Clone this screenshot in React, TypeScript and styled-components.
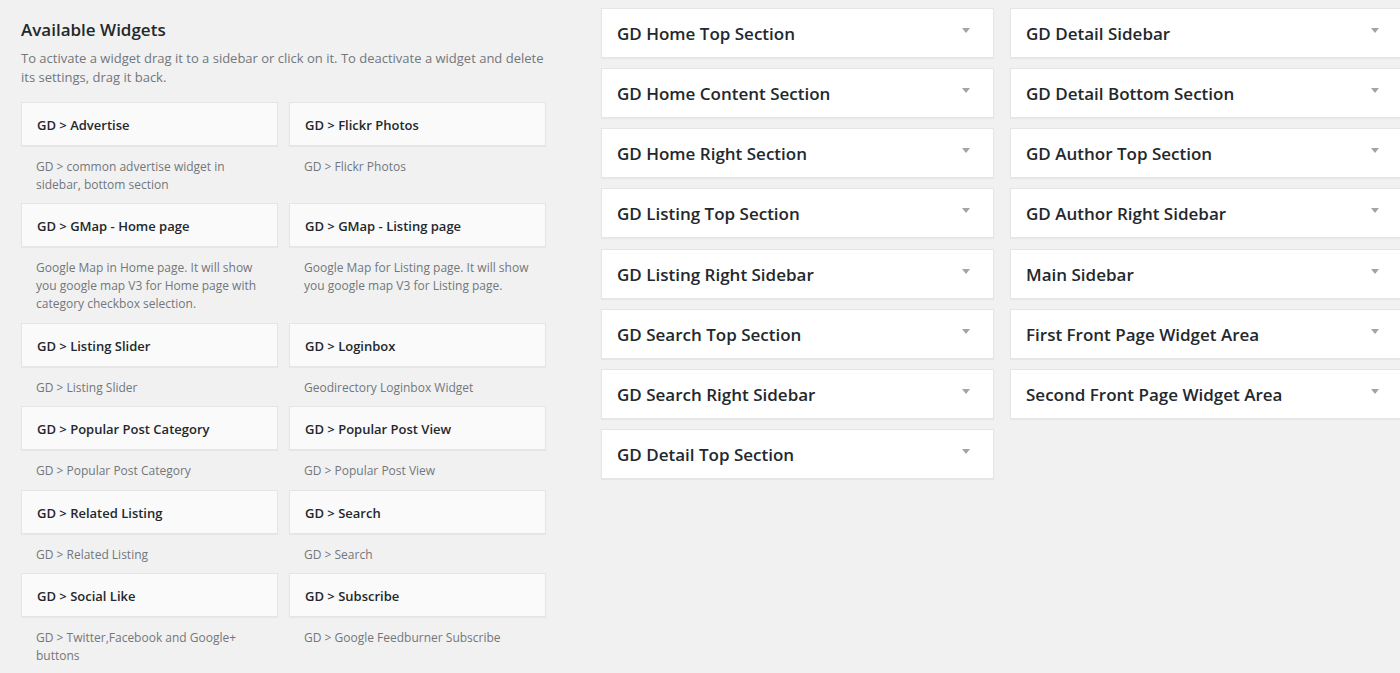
import React from "react";
import styled, { createGlobalStyle } from "styled-components";

const GlobalStyle = createGlobalStyle`
  html, body {
    margin: 0;
    padding: 0;
    background: #f1f1f1;
    overflow: hidden;
  }
  body {
    font-family: "Open Sans", "Liberation Sans", sans-serif;
    color: #23282d;
  }
`;

const Page = styled.div`
  display: flex;
  align-items: flex-start;
  padding-left: 21px;
  width: 1420px;
  height: 673px;
  box-sizing: border-box;
`;

const LeftPane = styled.section`
  width: 524px;
  flex: none;
  padding-top: 19px;
`;

const Heading = styled.h2`
  margin: 0;
  font-size: 17px;
  line-height: 22px;
  font-weight: 600;
  color: #23282d;
`;

const Intro = styled.p`
  margin: 7.5px 0 15px;
  font-size: 13px;
  line-height: 19px;
  color: #72777c;
`;

const WidgetGrid = styled.div`
  display: grid;
  grid-template-columns: 257px 257px;
  column-gap: 11px;
`;

const Widget = styled.div`
  display: flex;
  flex-direction: column;
`;

const WidgetTop = styled.div`
  background: #fafafa;
  border: 1px solid #e5e5e5;
  box-shadow: 0 1px 1px rgba(0, 0, 0, 0.04);
  padding: 15px 15px 13px;
  font-size: 13px;
  line-height: 14px;
  font-weight: 600;
  color: #23282d;
`;

const WidgetDesc = styled.div`
  padding: 12px 15px 9.5px;
  font-size: 12px;
  line-height: 18px;
  color: #72777c;
`;

const RightPane = styled.section`
  display: flex;
  gap: 16px;
  margin-left: 56px;
  padding-top: 8px;
`;

const SidebarColumn = styled.div`
  width: 393px;
  display: flex;
  flex-direction: column;
  gap: 10.15px;
`;

const SidebarPanel = styled.div`
  background: #fff;
  border: 1px solid #e5e5e5;
  box-shadow: 0 1px 1px rgba(0, 0, 0, 0.04);
  padding: 15px 15px 13px;
  display: flex;
  align-items: center;
  justify-content: space-between;
`;

const SidebarName = styled.h2`
  margin: 0;
  font-size: 17px;
  line-height: 20px;
  font-weight: 600;
  color: #23282d;
`;

const Arrow = styled.span`
  width: 0;
  height: 0;
  margin-right: 8px;
  margin-top: -7px;
  border-left: 4.5px solid transparent;
  border-right: 4.5px solid transparent;
  border-top: 5px solid #a0a5aa;
`;

const widgets: { title: string; desc: string }[] = [
  { title: "GD > Advertise", desc: "GD > common advertise widget in sidebar, bottom section" },
  { title: "GD > Flickr Photos", desc: "GD > Flickr Photos" },
  {
    title: "GD > GMap - Home page",
    desc: "Google Map in Home page. It will show you google map V3 for Home page with category checkbox selection.",
  },
  {
    title: "GD > GMap - Listing page",
    desc: "Google Map for Listing page. It will show you google map V3 for Listing page.",
  },
  { title: "GD > Listing Slider", desc: "GD > Listing Slider" },
  { title: "GD > Loginbox", desc: "Geodirectory Loginbox Widget" },
  { title: "GD > Popular Post Category", desc: "GD > Popular Post Category" },
  { title: "GD > Popular Post View", desc: "GD > Popular Post View" },
  { title: "GD > Related Listing", desc: "GD > Related Listing" },
  { title: "GD > Search", desc: "GD > Search" },
  { title: "GD > Social Like", desc: "GD > Twitter,Facebook and Google+ buttons" },
  { title: "GD > Subscribe", desc: "GD > Google Feedburner Subscribe" },
];

const sidebarColumns: string[][] = [
  [
    "GD Home Top Section",
    "GD Home Content Section",
    "GD Home Right Section",
    "GD Listing Top Section",
    "GD Listing Right Sidebar",
    "GD Search Top Section",
    "GD Search Right Sidebar",
    "GD Detail Top Section",
  ],
  [
    "GD Detail Sidebar",
    "GD Detail Bottom Section",
    "GD Author Top Section",
    "GD Author Right Sidebar",
    "Main Sidebar",
    "First Front Page Widget Area",
    "Second Front Page Widget Area",
  ],
];

export default function App() {
  return (
    <>
      <GlobalStyle />
      <Page>
        <LeftPane>
          <Heading>Available Widgets</Heading>
          <Intro>
            To activate a widget drag it to a sidebar or click on it. To deactivate a widget and delete
            its settings, drag it back.
          </Intro>
          <WidgetGrid>
            {widgets.map((w) => (
              <Widget key={w.title}>
                <WidgetTop>{w.title}</WidgetTop>
                <WidgetDesc>{w.desc}</WidgetDesc>
              </Widget>
            ))}
          </WidgetGrid>
        </LeftPane>
        <RightPane>
          {sidebarColumns.map((col, i) => (
            <SidebarColumn key={i}>
              {col.map((name) => (
                <SidebarPanel key={name}>
                  <SidebarName>{name}</SidebarName>
                  <Arrow />
                </SidebarPanel>
              ))}
            </SidebarColumn>
          ))}
        </RightPane>
      </Page>
    </>
  );
}
